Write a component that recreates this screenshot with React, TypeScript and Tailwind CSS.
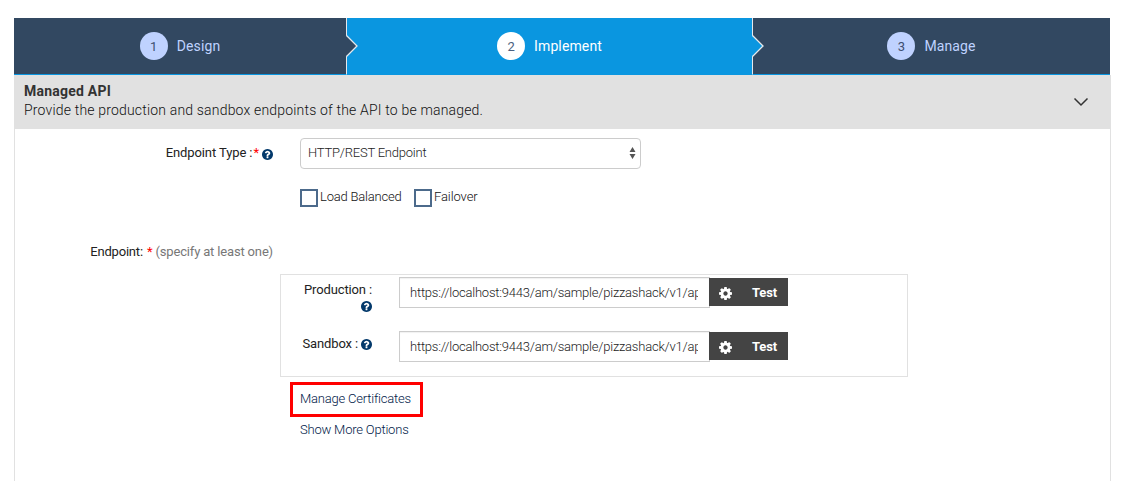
import React from "react";

function Help({ className = "" }: { className?: string }) {
  return (
    <svg viewBox="128 128 1536 1536" className={`size-[11px] shrink-0 fill-[#03396b] ${className}`}>
      <path d="M1024 1376v-192q0-14-9-23t-23-9h-192q-14 0-23 9t-9 23v192q0 14 9 23t23 9h192q14 0 23-9t9-23zm256-672q0-88-55.5-163t-138.5-116-170-41q-243 0-371 213-15 24 8 42l132 100q7 6 19 6 16 0 25-12 53-68 86-92 34-24 86-24 48 0 85.5 26t37.5 59q0 38-20 61t-68 45q-63 28-115.5 86.5t-52.5 125.5v36q0 14 9 23t23 9h192q14 0 23-9t9-23q0-19 21.5-49.5t54.5-49.5q32-18 49-28.5t46-35 44.5-48 28-60.5 12.5-81zm384 192q0 209-103 385.5t-279.5 279.5-385.5 103-385.5-103-279.5-279.5-103-385.5 103-385.5 279.5-279.5 385.5-103 385.5 103 279.5 279.5 103 385.5z" />
    </svg>
  );
}

function Gear() {
  return (
    <svg viewBox="0 128 1536 1536" className="mt-0.5 size-[13px] fill-white">
      <path d="M1024 896q0-106-75-181t-181-75-181 75-75 181 75 181 181 75 181-75 75-181zm512-109v222q0 12-8 23t-20 13l-185 28q-19 54-39 91 35 50 107 138 10 12 10 25t-9 23q-27 37-99 108t-94 71q-12 0-26-9l-138-108q-44 23-91 38-16 136-29 186-7 28-36 28h-222q-14 0-24.5-8.5t-11.5-21.5l-28-184q-49-16-90-37l-141 107q-10 9-25 9-14 0-25-11-126-114-165-168-7-10-7-23 0-12 8-23 15-21 51-66.5t54-70.5q-27-50-41-99l-183-27q-13-2-21-12.5t-8-23.5v-222q0-12 8-23t19-13l186-28q14-46 39-92-40-57-107-138-10-12-10-24 0-10 9-23 26-36 98.5-107.5t94.5-71.5q13 0 26 10l138 107q44-23 91-38 16-136 29-186 7-28 36-28h222q14 0 24.5 8.5t11.5 21.5l28 184q49 16 90 37l142-107q9-9 24-9 13 0 25 10 129 119 165 170 7 8 7 22 0 12-8 23-15 21-51 66.5t-54 70.5q26 50 41 98l183 28q13 2 21 12.5t8 23.5z" />
    </svg>
  );
}

function Arrow({ className }: { className: string }) {
  return (
    <svg viewBox="0 0 12 22" className={`absolute top-[17px] -right-[12px] z-10 h-[22px] w-3 ${className}`}>
      <path d="M0 0.5L11 11L0 21.5Z" />
      <path d="M0.5 0.5L11 11L0.5 21.5" fill="none" stroke="#e6e9ec" strokeWidth="1.3" />
    </svg>
  );
}

function Step({ n, label, active = false }: { n: number; label: string; active?: boolean }) {
  return (
    <div className="flex items-center">
      <span
        className={`flex size-7 items-center justify-center rounded-full pt-px text-[13px] ${
          active ? "bg-white text-[#4a6080]" : "bg-[#bfd2ff] text-[#3d4f70]"
        }`}
      >
        {n}
      </span>
      <span className={`ml-[9px] text-[14px] tracking-[0.12px] ${active ? "text-white" : "text-[#bfd2ff]"}`}>
        {label}
      </span>
    </div>
  );
}

function EndpointInput() {
  return (
    <div className="flex">
      <div className="h-[31px] w-[311px] border border-[#ccc] pr-[11px] pl-[10px] shadow-[inset_0_1px_1px_rgba(0,0,0,0.06)]">
        <div className="overflow-hidden text-[13px] leading-[29px] font-light tracking-[-0.22px] whitespace-nowrap text-[#222]">
          https://localhost:9443/am/sample/pizzashack/v1/api/
        </div>
      </div>
      <button className="mt-px -ml-px flex h-7 w-[79px] items-center bg-[#444] pl-[10px] text-[13px] font-bold text-white">
        <Gear />
        <span className="mt-0.5 ml-5 tracking-[-0.1px]">Test</span>
      </button>
    </div>
  );
}

export default function App() {
  return (
    <div className="h-[481px] overflow-hidden bg-white pt-[18px] pl-[14px] font-['Roboto',sans-serif] text-[13px] text-[#333]">
      <div className="w-[1097px]">
        <div className="flex h-[57px] w-[1096px]">
          <div className="relative flex w-[333px] justify-center border-r border-b border-r-[#e6e9ec] border-b-[#0a96e0] bg-[#324861]">
            <Step n={1} label="Design" />
            <Arrow className="fill-[#324861]" />
          </div>
          <div className="relative flex w-[406px] justify-center border-r border-b border-r-[#e6e9ec] border-b-[#0a96e0] bg-[#0a96e0]">
            <Step n={2} label="Implement" active />
            <Arrow className="fill-[#0a96e0]" />
          </div>
          <div className="flex w-[357px] justify-center border-b border-[#0a96e0] bg-[#324861]">
            <Step n={3} label="Manage" />
          </div>
        </div>
        <div className="h-[406px] border-x border-[#e1e1e1]">
          <div className="flex h-[54px] items-center justify-between bg-[#e1e1e1] pr-[21px] pl-[9px]">
            <div className="-mt-0.5 text-[14px] leading-[19px]">
              <div className="font-bold tracking-[0.22px]">Managed API</div>
              <div className="font-light tracking-[0.18px] text-[#111]">
                Provide the production and sandbox endpoints of the API to be managed.
              </div>
            </div>
            <svg viewBox="0 0 16 10" className="h-[10px] w-4">
              <path d="M1.5 1.5L8 8L14.5 1.5" fill="none" stroke="#333" strokeWidth="1.5" />
            </svg>
          </div>

          <div className="flex pt-[9px]">
            <div className="flex h-[29px] w-[258px] items-center justify-end text-[#222]">
              <span className="tracking-[-0.1px]">Endpoint Type :</span>
              <span className="ml-px text-[#f00]">*</span>
              <Help className="mt-[3px] ml-[3px]" />
            </div>
            <div className="ml-[27px]">
              <div className="flex h-[31px] w-[341px] items-center justify-between rounded-[4px] border border-[#ccc] pr-1 pl-[7px]">
                <span className="-mt-0.5 font-light tracking-[-0.22px] text-[#222]">HTTP/REST Endpoint</span>
                <svg viewBox="0 0 7 12" className="-mt-px h-3 w-[7px] fill-[#555]">
                  <path d="M0.5 5L3.5 0L6.5 5ZM0.5 7L3.5 12L6.5 7Z" />
                </svg>
              </div>
              <div className="mt-5 flex h-[18px] font-light whitespace-nowrap text-[#111]">
                <span className="size-[18px] border-2 border-[#4c6a8b]" />
                <span className="w-[83px] shrink-0 pl-0.5 leading-4 tracking-[-0.2px]">Load Balanced</span>
                <span className="ml-[13px] size-[18px] border-2 border-[#4c6a8b]" />
                <span className="ml-0.5 leading-4 tracking-[-0.1px]">Failover</span>
              </div>
            </div>
          </div>

          <div className="mt-[35px] w-[258px] text-right leading-5 tracking-[-0.18px] text-[#222]">
            Endpoint: <span className="ml-px text-[#f00]">*</span>{" "}
            <span className="tracking-[-0.16px] text-[#777]">(specify at least one)</span>
          </div>

          <div className="mt-[12px] ml-[265px] h-[103px] w-[628px] border border-[#e1e1e1] pt-[2px] text-[#222]">
            <div className="flex h-[54px]">
              <div className="flex w-[91px] flex-col items-end pt-[4px] leading-[18px] tracking-[-0.13px]">
                <span>Production :</span>
                <Help className="mt-[2px]" />
              </div>
              <div className="ml-[27px]"><EndpointInput /></div>
            </div>
            <div className="flex">
              <div className="flex h-[25px] w-[91px] items-center justify-end tracking-[-0.13px]">
                <span>Sandbox :</span>
                <Help className="mt-px ml-[3px]" />
              </div>
              <div className="ml-[27px]"><EndpointInput /></div>
            </div>
          </div>

          <div className="mt-[5px] ml-[275px] flex h-[35px] w-[133px] items-center border-[3px] border-[#f00] pb-0.5 pl-[7px] font-light tracking-[-0.2px] text-[#002048]">
            Manage Certificates
          </div>
          <div className="mt-[3px] ml-[285px] leading-5 font-light tracking-[-0.2px] text-[#002048]">Show More Options</div>
        </div>
      </div>
    </div>
  );
}
